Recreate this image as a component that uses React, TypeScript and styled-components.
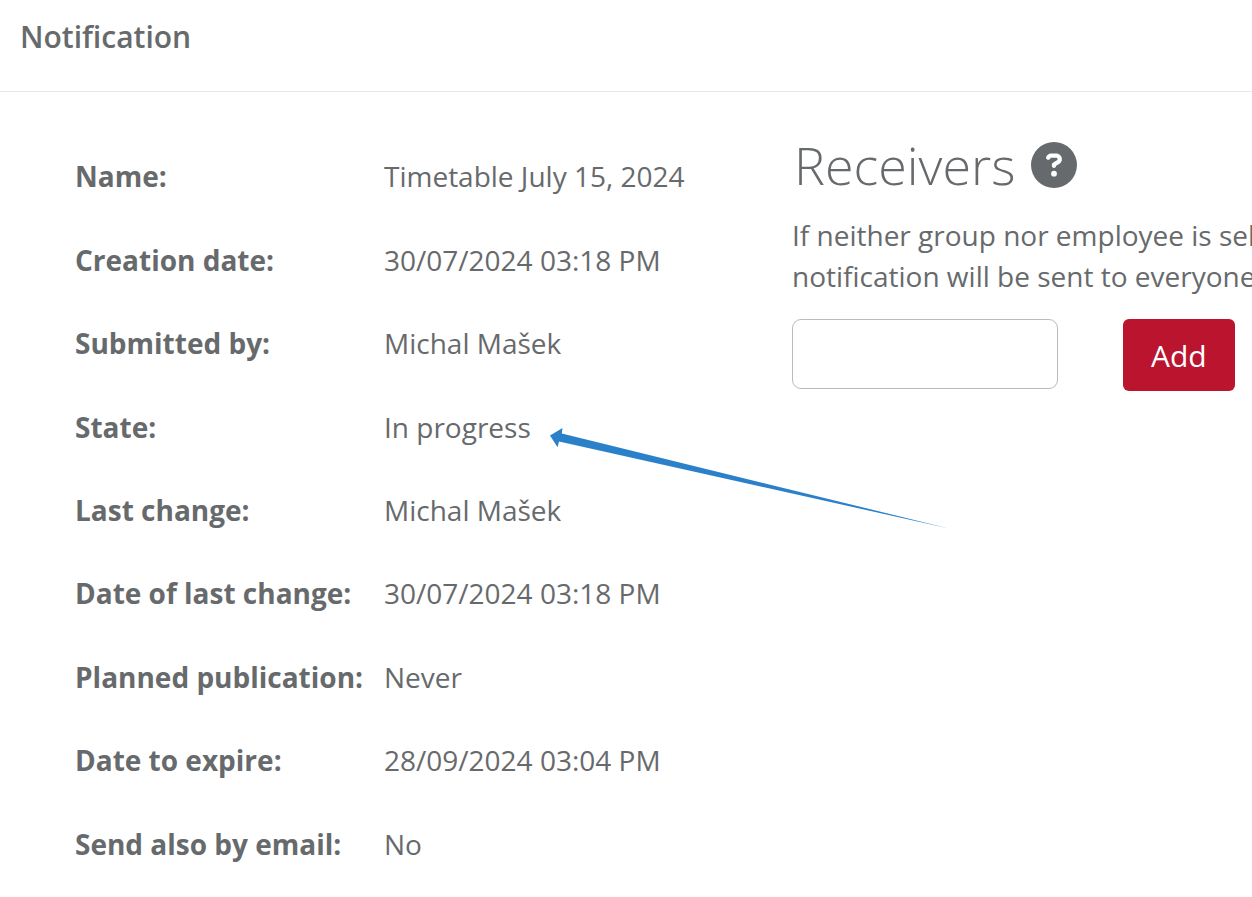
import React from "react";
import styled, { createGlobalStyle } from "styled-components";
import { FaCircleQuestion } from "react-icons/fa6";

const GlobalStyle = createGlobalStyle`
  *, *::before, *::after { box-sizing: border-box; }
  body {
    margin: 0;
    background: #fff;
    color: #676a6c;
    font-family: "Open Sans", sans-serif;
    font-size: 28px;
    line-height: 41px;
    overflow-x: hidden;
  }
`;

const Header = styled.header`
  padding: 16px 20px 34px;
  border-bottom: 1px solid #e7eaec;
`;

const Title = styled.h1`
  margin: 0;
  font-size: 30px;
  font-weight: 600;
  line-height: 41px;
`;

const Content = styled.main`
  display: grid;
  grid-template-columns: 717px minmax(0, 1fr);
  padding: 43px 0 0 75px;
  overflow: hidden;
`;

const Details = styled.dl`
  display: grid;
  grid-template-columns: 309px minmax(0, 1fr);
  grid-auto-rows: 1fr;
  align-items: center;
  min-height: 751px;
  margin: 0;
`;

const Term = styled.dt`
  font-weight: 700;
  white-space: nowrap;
`;

const Value = styled.dd`
  position: relative;
  margin: 0;
`;

const Arrow = styled.svg`
  position: absolute;
  top: 17px;
  left: 164px;
  z-index: 1;
  pointer-events: none;
`;

const Receivers = styled.section`
  min-width: 0;
`;

const Heading = styled.h2`
  display: flex;
  align-items: center;
  gap: 16px;
  margin: 0 0 20px;
  padding-left: 2px;
  font-size: 52px;
  font-weight: 300;
  line-height: 60px;
`;

const HelpButton = styled.button`
  display: flex;
  padding: 0;
  border: 0;
  background: none;
  color: inherit;
  font-size: 46px;
`;

const Hint = styled.p`
  margin: 0 0 22px;
  white-space: nowrap;
`;

const AddForm = styled.form`
  display: flex;
  align-items: flex-start;
  gap: 65px;
`;

const ReceiverInput = styled.input`
  width: 266px;
  height: 70px;
  padding: 0 16px;
  border: 1px solid #bbb;
  border-radius: 9px;
  background: #fff;
  color: inherit;
  font: inherit;
`;

const AddButton = styled.button`
  height: 72px;
  padding: 0 28px;
  border: 0;
  border-radius: 6px;
  background: #ba142f;
  color: #fff;
  font: inherit;
  font-size: 30px;
`;

const details = [
  { term: "Name:", value: "Timetable July 15, 2024" },
  { term: "Creation date:", value: "30/07/2024 03:18 PM" },
  { term: "Submitted by:", value: "Michal Mašek" },
  { term: "State:", value: "In progress", marked: true },
  { term: "Last change:", value: "Michal Mašek" },
  { term: "Date of last change:", value: "30/07/2024 03:18 PM" },
  { term: "Planned publication:", value: "Never" },
  { term: "Date to expire:", value: "28/09/2024 03:04 PM" },
  { term: "Send also by email:", value: "No" },
];

export default function App() {
  return (
    <>
      <GlobalStyle />
      <Header>
        <Title>Notification</Title>
      </Header>
      <Content>
        <Details>
          {details.map(({ term, value, marked }) => (
            <React.Fragment key={term}>
              <Term>{term}</Term>
              <Value>
                {value}
                {marked && (
                  <Arrow width="404" height="106" viewBox="0 0 404 106" aria-hidden="true">
                    <path
                      d="M2 11.5 L14.5 4 L13.8 9.6 L401 104.5 L11 17.4 L9.6 23.3 Z"
                      fill="#2a81ca"
                    />
                  </Arrow>
                )}
              </Value>
            </React.Fragment>
          ))}
        </Details>
        <Receivers>
          <Heading>
            Receivers
            <HelpButton type="button" aria-label="Help">
              <FaCircleQuestion />
            </HelpButton>
          </Heading>
          <Hint>
            If neither group nor employee is sel
            <br />
            notification will be sent to everyone
          </Hint>
          <AddForm onSubmit={(event) => event.preventDefault()}>
            <ReceiverInput type="text" aria-label="Receiver" />
            <AddButton type="submit">Add</AddButton>
          </AddForm>
        </Receivers>
      </Content>
    </>
  );
}
